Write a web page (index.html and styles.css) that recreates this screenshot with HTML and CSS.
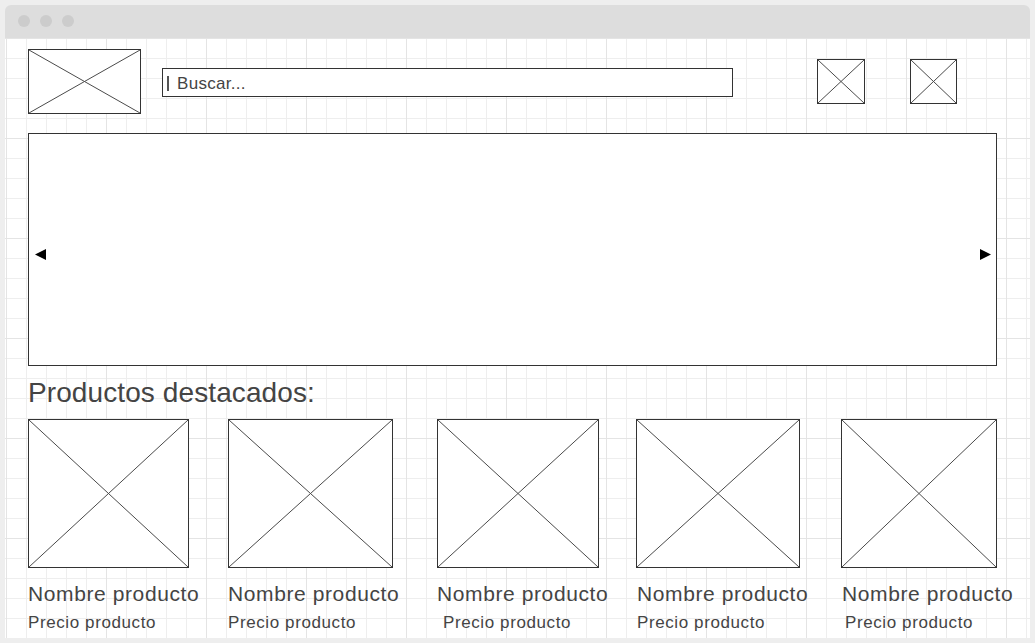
FILE: index.html
```html
<!DOCTYPE html>
<html lang="es">
<head>
<meta charset="utf-8">
<title>Tienda - wireframe</title>
<link rel="stylesheet" href="styles.css">
</head>
<body>
<div class="window">
  <div class="titlebar">
    <span class="dot"></span><span class="dot"></span><span class="dot"></span>
  </div>
  <div class="canvas">
    <header class="topbar">
      <div class="ph logo">
        <svg class="xmark" viewBox="0 0 100 100" preserveAspectRatio="none"><line x1="0" y1="0" x2="100" y2="100"/><line x1="100" y1="0" x2="0" y2="100"/></svg>
      </div>
      <div class="search"><span class="caret"></span><span class="search-text">Buscar...</span></div>
      <div class="ph icon icon-a">
        <svg class="xmark" viewBox="0 0 100 100" preserveAspectRatio="none"><line x1="0" y1="0" x2="100" y2="100"/><line x1="100" y1="0" x2="0" y2="100"/></svg>
      </div>
      <div class="ph icon icon-b">
        <svg class="xmark" viewBox="0 0 100 100" preserveAspectRatio="none"><line x1="0" y1="0" x2="100" y2="100"/><line x1="100" y1="0" x2="0" y2="100"/></svg>
      </div>
    </header>

    <section class="carousel">
      <svg class="arrow" viewBox="0 0 11 11"><polygon points="11,0 11,11 0,5.5"/></svg>
      <svg class="arrow" viewBox="0 0 11 11"><polygon points="0,0 11,5.5 0,11"/></svg>
    </section>

    <h2 class="section-title">Productos destacados:</h2>

    <div class="products">
      <article class="product p1">
        <div class="ph thumb"><svg class="xmark" viewBox="0 0 100 100" preserveAspectRatio="none"><line x1="0" y1="0" x2="100" y2="100"/><line x1="100" y1="0" x2="0" y2="100"/></svg></div>
        <div class="name">Nombre producto</div>
        <div class="price">Precio producto</div>
      </article>
      <article class="product p2">
        <div class="ph thumb"><svg class="xmark" viewBox="0 0 100 100" preserveAspectRatio="none"><line x1="0" y1="0" x2="100" y2="100"/><line x1="100" y1="0" x2="0" y2="100"/></svg></div>
        <div class="name">Nombre producto</div>
        <div class="price">Precio producto</div>
      </article>
      <article class="product p3">
        <div class="ph thumb"><svg class="xmark" viewBox="0 0 100 100" preserveAspectRatio="none"><line x1="0" y1="0" x2="100" y2="100"/><line x1="100" y1="0" x2="0" y2="100"/></svg></div>
        <div class="name">Nombre producto</div>
        <div class="price">Precio producto</div>
      </article>
      <article class="product p4">
        <div class="ph thumb"><svg class="xmark" viewBox="0 0 100 100" preserveAspectRatio="none"><line x1="0" y1="0" x2="100" y2="100"/><line x1="100" y1="0" x2="0" y2="100"/></svg></div>
        <div class="name">Nombre producto</div>
        <div class="price">Precio producto</div>
      </article>
      <article class="product p5">
        <div class="ph thumb"><svg class="xmark" viewBox="0 0 100 100" preserveAspectRatio="none"><line x1="0" y1="0" x2="100" y2="100"/><line x1="100" y1="0" x2="0" y2="100"/></svg></div>
        <div class="name">Nombre producto</div>
        <div class="price">Precio producto</div>
      </article>
    </div>
  </div>
</div>
</body>
</html>
```

FILE: styles.css
```css
* { box-sizing: border-box; }

html, body {
  margin: 0;
  padding: 0;
  height: 643px;
  overflow: hidden;
  background: #eeeeee;
  font-family: "Liberation Sans", Arial, sans-serif;
  color: #444444;
}

.window {
  margin: 5px 0 0 5px;
  width: 1025px;
  height: 633px;
  border-radius: 6px 6px 0 0;
  overflow: hidden;
  display: flex;
  flex-direction: column;
}

.titlebar {
  height: 33px;
  flex: none;
  background: #dddddd;
  display: flex;
  align-items: flex-start;
  gap: 10px;
  padding: 10px 0 0 13px;
}

.dot {
  width: 12px;
  height: 12px;
  border-radius: 50%;
  background: #cccccc;
}

.canvas {
  flex: 1;
  padding: 11px 0 0 23px;
  background-color: #ffffff;
  background-image:
    linear-gradient(to right, #e4e4e4 1px, transparent 1px),
    linear-gradient(to bottom, #e4e4e4 1px, transparent 1px),
    linear-gradient(to right, #eeeeee 1px, transparent 1px),
    linear-gradient(to bottom, #eeeeee 1px, transparent 1px);
  background-size: 100px 100px, 100px 100px, 20px 20px, 20px 20px;
  background-position: 1px 0, 1px 0, 1px 0, 1px 0;
}

/* placeholders */
.ph {
  border: 1px solid #333333;
  background: #ffffff;
  flex: none;
}

.xmark {
  display: block;
  width: 100%;
  height: 100%;
}

.xmark line {
  stroke: #4a4a4a;
  stroke-width: 1;
  vector-effect: non-scaling-stroke;
}

/* top bar */
.topbar {
  display: flex;
  align-items: center;
  height: 65px;
}

.logo {
  width: 113px;
  height: 65px;
}

.search {
  margin-left: 21px;
  margin-top: 2px;
  width: 571px;
  height: 29px;
  border: 1px solid #333333;
  background: #ffffff;
  display: flex;
  align-items: center;
  padding: 2px 0 0 4px;
}

.caret {
  width: 2px;
  height: 15px;
  background: #555555;
  margin-right: 8px;
}

.search-text {
  font-size: 17px;
  letter-spacing: 0.3px;
  color: #444444;
}

.icon {
  height: 45px;
}

.icon-a {
  width: 48px;
  margin-left: 84px;
}

.icon-b {
  width: 47px;
  margin-left: 45px;
}

/* carousel */
.carousel {
  margin-top: 19px;
  width: 969px;
  height: 233px;
  border: 1px solid #333333;
  background: #ffffff;
  display: flex;
  justify-content: space-between;
  align-items: center;
  padding: 9px 5px 0 6px;
}

.arrow {
  width: 11px;
  height: 11px;
  display: block;
}

.arrow polygon {
  fill: #000000;
}

/* section title */
.section-title {
  margin: 12px 0 0 0;
  font-size: 28px;
  line-height: 30px;
  font-weight: normal;
  letter-spacing: 0.1px;
  color: #444444;
}

/* products */
.products {
  margin-top: 11px;
  display: flex;
  align-items: flex-start;
}

.product {
  flex: none;
  white-space: nowrap;
}

.thumb {
  height: 149px;
}

.name {
  margin-top: 14px;
  font-size: 21px;
  line-height: 24px;
  letter-spacing: 0.6px;
}

.price {
  margin-top: 7px;
  font-size: 17px;
  line-height: 20px;
  letter-spacing: 0.6px;
}

.p1 { width: 161px; }
.p2 { width: 165px; margin-left: 39px; }
.p3 { width: 162px; margin-left: 44px; }
.p4 { width: 164px; margin-left: 37px; }
.p5 { width: 156px; margin-left: 41px; }

.p3 .price { padding-left: 6px; }
.p4 .name, .p4 .price { padding-left: 1px; }
.p5 .name { padding-left: 1px; }
.p5 .price { padding-left: 4px; }
```
